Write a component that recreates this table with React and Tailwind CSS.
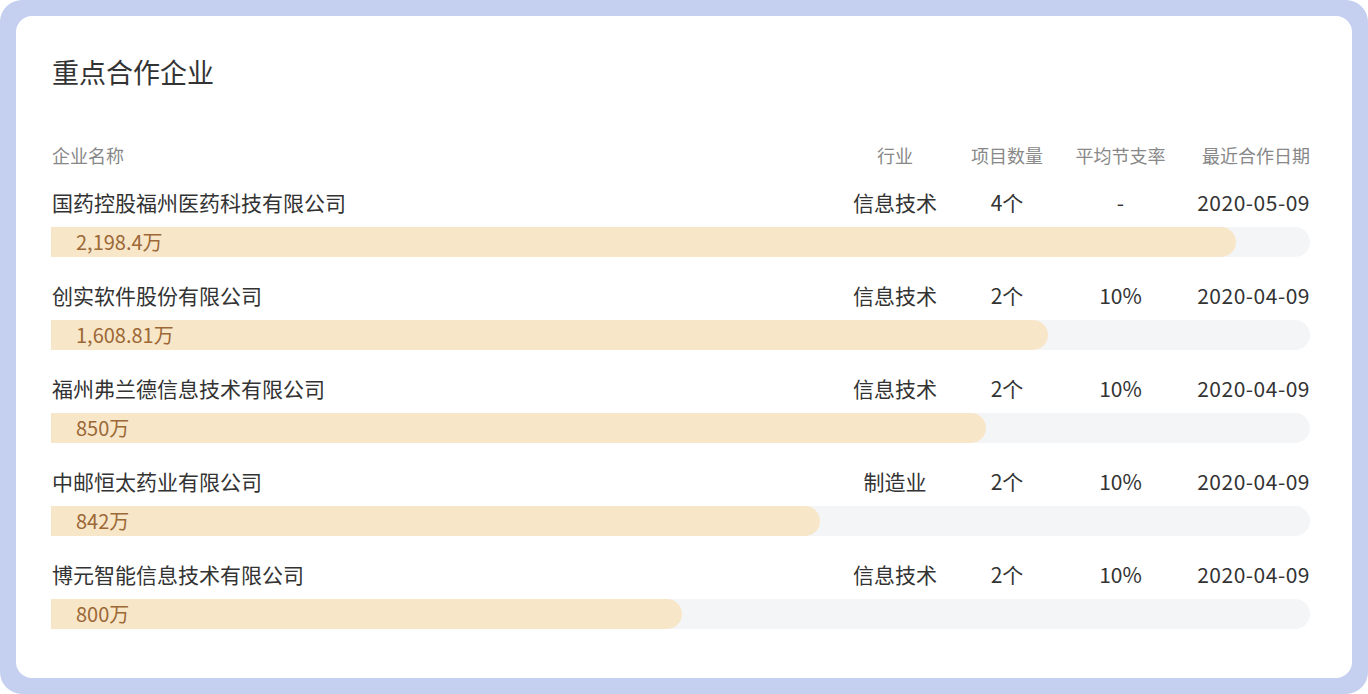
import React from 'react';

const companies = [
  { name: '国药控股福州医药科技有限公司', industry: '信息技术', projects: '4个', rate: '-', date: '2020-05-09', amount: '2,198.4万', pct: 94.1 },
  { name: '创实软件股份有限公司', industry: '信息技术', projects: '2个', rate: '10%', date: '2020-04-09', amount: '1,608.81万', pct: 79.2 },
  { name: '福州弗兰德信息技术有限公司', industry: '信息技术', projects: '2个', rate: '10%', date: '2020-04-09', amount: '850万', pct: 74.3 },
  { name: '中邮恒太药业有限公司', industry: '制造业', projects: '2个', rate: '10%', date: '2020-04-09', amount: '842万', pct: 61.1 },
  { name: '博元智能信息技术有限公司', industry: '信息技术', projects: '2个', rate: '10%', date: '2020-04-09', amount: '800万', pct: 50.1 },
];

const CompanyRow = ({ item }) => (
  <div className="mb-[25px]">
    <div className="flex items-center h-[28px] text-[21px] text-[#333]">
      <div className="flex-1 pl-px">{item.name}</div>
      <div className="w-[112px] text-center">{item.industry}</div>
      <div className="w-[112px] text-center">{item.projects}</div>
      <div className="w-[115px] text-center">{item.rate}</div>
      <div className="w-[132px] text-right tracking-[0.5px]">{item.date}</div>
    </div>
    <div className="mt-[10px] h-[30px] bg-[#f4f5f7] rounded-r-full">
      {/* bar width comes from data */}
      <div
        className="h-full bg-[#f8e6c9] rounded-r-full flex items-center pl-[25px] text-[20px] text-[#9b6836]"
        style={{ width: `${item.pct}%` }}
      >
        {item.amount}
      </div>
    </div>
  </div>
);

export default function App() {
  return (
    <div className="bg-white" style={{ fontFamily: '"Noto Sans CJK SC", "Noto Sans", sans-serif' }}>
      <div className="h-[694px] bg-[#c5cff0] rounded-[22px] p-4">
        <div className="h-full bg-white rounded-2xl pl-[35px] pr-[42px] pt-[38px]">
          <h2 className="text-[27px] leading-[36px] text-[#333] pl-px">重点合作企业</h2>

          {/* Header */}
          <div className="mt-[53px] flex items-center h-[24px] text-[18px] text-[#888]">
            <div className="flex-1 pl-px">企业名称</div>
            <div className="w-[112px] text-center">行业</div>
            <div className="w-[112px] text-center">项目数量</div>
            <div className="w-[115px] text-center">平均节支率</div>
            <div className="w-[132px] text-right">最近合作日期</div>
          </div>

          <div className="mt-[22px]">
            {companies.map((c) => (
              <CompanyRow key={c.name} item={c} />
            ))}
          </div>
        </div>
      </div>
    </div>
  );
}
